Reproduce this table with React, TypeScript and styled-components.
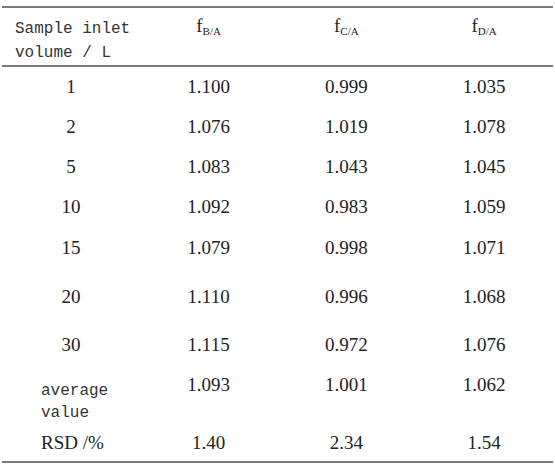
import styled, { createGlobalStyle } from 'styled-components';

const GlobalStyle = createGlobalStyle`
  html, body {
    margin: 0;
    padding: 0;
    background: #fff;
  }
`;

const Page = styled.div`
  padding: 6px 0 0 2px;
`;

const Table = styled.table`
  width: 551px;
  border-collapse: collapse;
  table-layout: fixed;
  border-top: 2px solid #7a7a7a;
  border-bottom: 2px solid #7a7a7a;
  color: #222;
`;

const HeadRow = styled.tr`
  height: 57px;
  border-bottom: 2px solid #7a7a7a;
`;

const HeadCell = styled.th`
  vertical-align: top;
  padding: 7px 0 0;
  font-weight: normal;
  text-align: center;
  font-family: 'Liberation Serif', 'Times New Roman', serif;
  font-size: 19px;
`;

const LabelHead = styled(HeadCell)`
  text-align: left;
  padding: 9px 0 0 13px;
  font-family: 'Liberation Mono', 'DejaVu Sans Mono', monospace;
  font-size: 16px;
  line-height: 24px;
  color: #333;
`;

const Sub = styled.sub`
  font-size: 11px;
  vertical-align: -3px;
`;

const Row = styled.tr<{ $h: number }>`
  height: ${(p) => p.$h}px;
`;

const Cell = styled.td<{ $top?: boolean }>`
  padding: ${(p) => (p.$top ? '10px 0 0' : '0')};
  text-align: center;
  vertical-align: ${(p) => (p.$top ? 'top' : 'middle')};
  font-family: 'Liberation Serif', 'Times New Roman', serif;
  font-size: 19px;
`;

const MonoCell = styled.td`
  padding: 16px 0 0 39px;
  vertical-align: top;
  font-family: 'Liberation Mono', 'DejaVu Sans Mono', monospace;
  font-size: 16px;
  line-height: 22px;
  color: #333;
`;

const LeftCell = styled.td`
  padding: 0 0 0 39px;
  vertical-align: middle;
  font-family: 'Liberation Serif', 'Times New Roman', serif;
  font-size: 19px;
`;

const rows: { v: string; b: string; c: string; d: string; h: number }[] = [
  { v: '1', b: '1.100', c: '0.999', d: '1.035', h: 41 },
  { v: '2', b: '1.076', c: '1.019', d: '1.078', h: 40 },
  { v: '5', b: '1.083', c: '1.043', d: '1.045', h: 40 },
  { v: '10', b: '1.092', c: '0.983', d: '1.059', h: 40 },
  { v: '15', b: '1.079', c: '0.998', d: '1.071', h: 41 },
  { v: '20', b: '1.110', c: '0.996', d: '1.068', h: 58 },
  { v: '30', b: '1.115', c: '0.972', d: '1.076', h: 38 },
];

export default function App() {
  return (
    <>
      <GlobalStyle />
      <Page>
        <Table>
          <thead>
            <HeadRow>
              <LabelHead>
                Sample inlet
                <br />
                volume / L
              </LabelHead>
              <HeadCell>
                f<Sub>B/A</Sub>
              </HeadCell>
              <HeadCell>
                f<Sub>C/A</Sub>
              </HeadCell>
              <HeadCell>
                f<Sub>D/A</Sub>
              </HeadCell>
            </HeadRow>
          </thead>
          <tbody>
            {rows.map((r) => (
              <Row key={r.v} $h={r.h}>
                <Cell>{r.v}</Cell>
                <Cell>{r.b}</Cell>
                <Cell>{r.c}</Cell>
                <Cell>{r.d}</Cell>
              </Row>
            ))}
            <Row $h={60}>
              <MonoCell>
                average
                <br />
                value
              </MonoCell>
              <Cell $top>1.093</Cell>
              <Cell $top>1.001</Cell>
              <Cell $top>1.062</Cell>
            </Row>
            <Row $h={38}>
              <LeftCell>RSD /%</LeftCell>
              <Cell>1.40</Cell>
              <Cell>2.34</Cell>
              <Cell>1.54</Cell>
            </Row>
          </tbody>
        </Table>
      </Page>
    </>
  );
}
